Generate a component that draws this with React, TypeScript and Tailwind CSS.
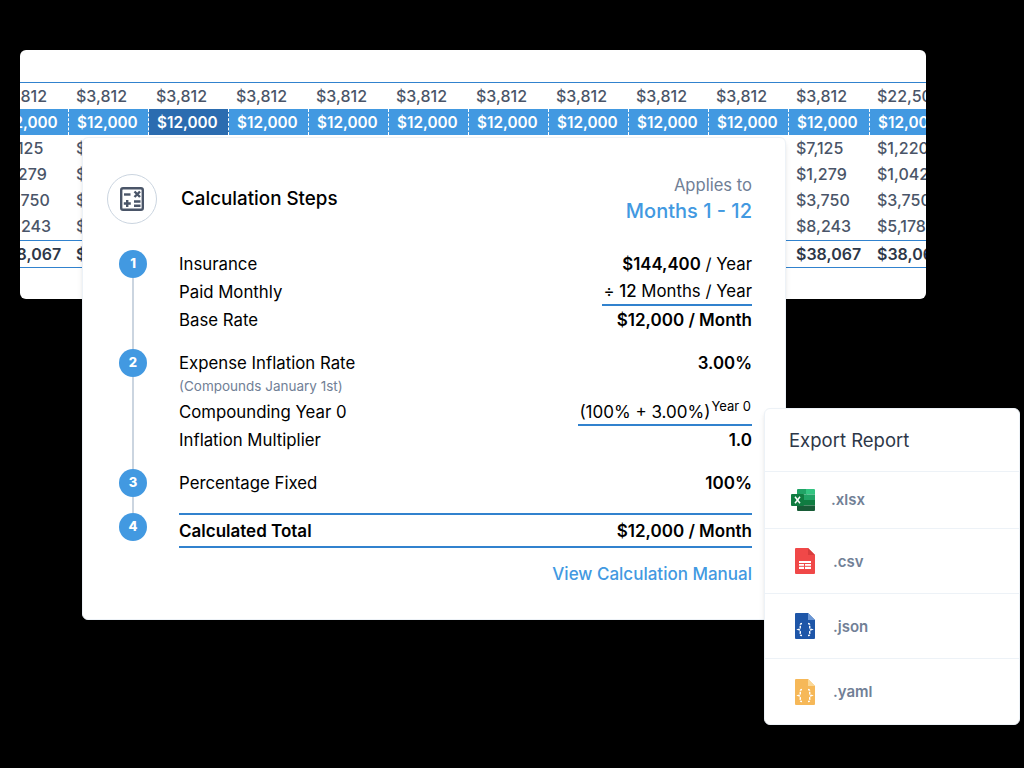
import React from "react";

const columns = [
  ...Array.from({ length: 11 }, () => ["$3,812", "$12,000", "$7,125", "$1,279", "$3,750", "$8,243", "$38,067"]),
  ["$22,500", "$12,000", "$1,220", "$1,042", "$3,750", "$5,178", "$38,067"],
];

function Cell({ children, className = "" }: { children: React.ReactNode; className?: string }) {
  return <div className={"h-[26px] w-[80px] shrink-0 pl-2 leading-[26px] whitespace-nowrap " + className}>{children}</div>;
}

function Table() {
  const row = (i: number, cls: string) =>
    columns.map((c, j) => (
      <Cell key={j} className={cls + (j === 11 ? " ml-px" : "")}>
        {c[i]}
      </Cell>
    ));
  return (
    <div className="ml-5 h-[249px] w-[906px] overflow-hidden rounded-md bg-white pt-8 text-base font-medium text-[#4a5568]">
      <div className="-ml-8 w-[1100px]">
        <div className="flex border-t border-[#3182ce]">{row(0, "")}</div>
        <div className="flex bg-[#4299e1] pl-px text-[15.3px] font-semibold text-white">
          {columns.map((c, j) => (
            <Cell
              key={j}
              className={
                (j === 11 ? "" : "border-r border-dashed border-white ") +
                (j === 2 ? "bg-[#2b6cb0] " : "") +
                (j === 10 ? "w-[81px] " : "") +
                "pl-2 pt-px"
              }
            >
              {c[1]}
            </Cell>
          ))}
        </div>
        {[2, 3, 4, 5].map((i) => (
          <div key={i} className="flex">
            {row(i, "")}
          </div>
        ))}
        <div className="mt-px flex h-[28px] items-center border-y border-[#3182ce] font-semibold text-[#2d3748]">
          {row(6, "")}
        </div>
      </div>
    </div>
  );
}

function CalcIcon() {
  return (
    <svg width="24" height="24" viewBox="0 0 24 24" fill="none">
      <rect x="1.200" y="1.200" width="21.600" height="21.600" rx="1.800" stroke="#4a5568" strokeWidth="2.400" />
      <g stroke="#4a5568" strokeWidth="2.400">
        <path d="M4 7.500h6.500" />
        <path d="M14.500 4.500l5.500 5.500M20 4.500l-5.500 5.500" />
        <path d="M7.200 13v7M3.800 16.500h7" />
        <path d="M14 14.500h6.500M14 18.700h6.500" />
      </g>
    </svg>
  );
}

function Row({ label, value, className = "" }: { label: React.ReactNode; value: React.ReactNode; className?: string }) {
  return (
    <div className={"flex h-7 items-center justify-between text-black " + className}>
      <span className="pt-0.5">{label}</span>
      {value}
    </div>
  );
}

function Step({ n, last, pb, children }: { n: number; last?: boolean; pb: string; children: React.ReactNode }) {
  return (
    <div className={"flex " + pb}>
      <div className="ml-3 -mb-[16px] flex w-7 shrink-0 flex-col items-center">
        <div className="flex h-7 w-7 shrink-0 items-center justify-center rounded-full bg-[#4299e1] text-[13px] font-extrabold text-white">
          {n}
        </div>
        {!last && <div className="w-0.5 flex-1 bg-[#cbd5e0]" />}
      </div>
      <div className="ml-8 flex-1">{children}</div>
    </div>
  );
}

function CalcCard() {
  const strong = "pt-0.5 text-[17px] font-semibold";
  return (
    <div className="absolute left-[82px] top-[137px] w-[704px] rounded-md border border-[#edf2f7] bg-white pb-[31px] pl-6 pr-[33px] pt-9 text-[16.8px] shadow-md">
      <div className="mb-[26px] flex h-[50px] items-center">
        <div className="flex h-[50px] w-[50px] items-center justify-center rounded-full border border-[#cbd5e0]">
          <CalcIcon />
        </div>
        <div className="ml-6 text-[18.8px] font-medium text-black">Calculation Steps</div>
        <div className="ml-auto text-right">
          <div className="-mt-0.5 h-[26px] text-[16.6px] leading-[26px] text-[#718096]">Applies to</div>
          <div className="h-[26px] text-[20px] font-medium leading-[26px] text-[#4299e1]">Months 1 - 12</div>
        </div>
      </div>
      <Step n={1} pb="pb-[15px]">
        <Row label="Insurance" value={<span className="pt-0.5"><span className="font-semibold">$144,400</span> / Year</span>} />
        <Row
          label="Paid Monthly"
          value={
            <span className="flex h-7 items-center border-b-2 border-[#3182ce] pl-px pt-0.5">
              ÷&nbsp;<span className="font-medium">12</span>&nbsp;Months / Year
            </span>
          }
        />
        <Row label="Base Rate" value={<span className={strong}>$12,000 / Month</span>} />
      </Step>
      <Step n={2} pb="pb-[15px]">
        <Row label="Expense Inflation Rate" value={<span className="pt-0.5 font-semibold">3.00%</span>} />
        <div className="mb-[3px] h-[18px] text-[13.500px] leading-[18px] text-[#718096]">(Compounds January 1st)</div>
        <Row
          label="Compounding Year 0"
          value={
            <span className="flex h-7 items-start border-b-2 border-[#3182ce] pl-px">
              <span className="text-[17px] leading-[29px]">(100% + 3.00%)</span>
              <span className="-mt-px ml-px pr-px text-[13px] leading-[18px]">Year 0</span>
            </span>
          }
        />
        <Row label="Inflation Multiplier" value={<span className={strong}>1.0</span>} />
      </Step>
      <Step n={3} pb="pb-4">
        <Row label="Percentage Fixed" value={<span className={strong}>100%</span>} />
      </Step>
      <Step n={4} last pb="pb-0">
        <div className="flex h-[35px] items-center justify-between border-y-2 border-[#3182ce] pt-0.5 text-[17px] font-semibold text-black">
          <span>Calculated Total</span>
          <span>$12,000 / Month</span>
        </div>
      </Step>
      <div className="mt-3 h-7 text-right text-[17px] font-medium leading-7 text-[#4299e1]">View Calculation Manual</div>
    </div>
  );
}

function XlsxIcon() {
  return (
    <svg width="24" height="22" viewBox="0 0 24 22">
      <path d="M7 0h9v5.500H6V1a1 1 0 0 1 1-1z" fill="#21a366" />
      <path d="M15 0h8a1 1 0 0 1 1 1v4.500h-9z" fill="#33c481" />
      <rect x="6" y="5.500" width="9" height="5.500" fill="#21a366" />
      <rect x="15" y="5.500" width="9" height="5.500" fill="#21a366" />
      <rect x="6" y="11" width="9" height="5.500" fill="#107c41" />
      <rect x="15" y="11" width="9" height="5.500" fill="#107c41" />
      <path d="M6 16.500h18V21a1 1 0 0 1-1 1H7a1 1 0 0 1-1-1z" fill="#185c37" />
      <rect x="0" y="5" width="13" height="12" rx="1" fill="#107c41" />
      <path d="M4 7.800l5 6.400M9 7.800l-5 6.400" stroke="#fff" strokeWidth="1.500" />
    </svg>
  );
}

function FileIcon({ body, fold, children }: { body: string; fold: string; children: React.ReactNode }) {
  return (
    <svg width="20" height="26" viewBox="0 0 20 26">
      <path d="M1 0h12l7 7v18a1 1 0 0 1-1 1H1a1 1 0 0 1-1-1V1a1 1 0 0 1 1-1z" fill={body} />
      <path d="M13 0l7 7h-7z" fill={fold} />
      {children}
    </svg>
  );
}

function Braces({ color }: { color: string }) {
  return (
    <g fill="none" stroke={color} strokeWidth="1.400" strokeDasharray="2.500 1">
      <path d="M7 10.500c-2 0-1.700 1-1.700 3s0 2.400-1.800 3c1.800 .6 1.800 1 1.800 3s-.3 3 1.700 3" />
      <path d="M13 10.500c2 0 1.700 1 1.700 3s0 2.400 1.800 3c-1.800 .6-1.800 1-1.800 3s.3 3-1.700 3" />
    </g>
  );
}

function ExportRow({ icon, label, h, gap, border = true }: { icon: React.ReactNode; label: string; h: string; gap: string; border?: boolean }) {
  return (
    <div className={"flex items-center pl-[26px] " + h + (border ? " border-b border-[#edf2f7]" : "")}>
      <div className="flex w-6 justify-end">{icon}</div>
      <span className={"text-[15px] font-semibold text-[#718096] " + gap}>{label}</span>
    </div>
  );
}

function ExportCard() {
  return (
    <div className="absolute left-[764px] top-[408px] h-[317px] w-[256px] rounded-md border border-[#edf2f7] bg-white shadow-md">
      <div className="flex h-[63px] items-center border-b border-[#edf2f7] pl-6 pt-0.5 text-[18.500px] text-[#2d3748]">Export Report</div>
      <ExportRow h="h-[57px]" gap="ml-4" label=".xlsx" icon={<XlsxIcon />} />
      <ExportRow
        h="h-[65px]"
        gap="ml-[18px] pt-0.5"
        label=".csv"
        icon={
          <FileIcon body="#f04848" fold="#d83c3c">
            <rect x="4" y="13" width="12" height="8" fill="#fff" />
            <path d="M4 15.500h12M4 18.300h12M9.500 15v6" stroke="#f04848" strokeWidth="1" />
          </FileIcon>
        }
      />
      <ExportRow
        h="h-[65px]"
        gap="ml-[18px] pt-0.5"
        label=".json"
        icon={
          <FileIcon body="#1e56a8" fold="#6c98d6">
            <Braces color="#fff" />
          </FileIcon>
        }
      />
      <ExportRow
        h="h-[65px]"
        gap="ml-[18px] pt-0.5"
        border={false}
        label=".yaml"
        icon={
          <FileIcon body="#f6b858" fold="#fbd896">
            <Braces color="#fff" />
          </FileIcon>
        }
      />
    </div>
  );
}

export default function App() {
  return (
    <div className="relative h-[768px] w-[1024px] overflow-hidden bg-black pt-[50px] font-['Inter',sans-serif]">
      <Table />
      <CalcCard />
      <ExportCard />
    </div>
  );
}
